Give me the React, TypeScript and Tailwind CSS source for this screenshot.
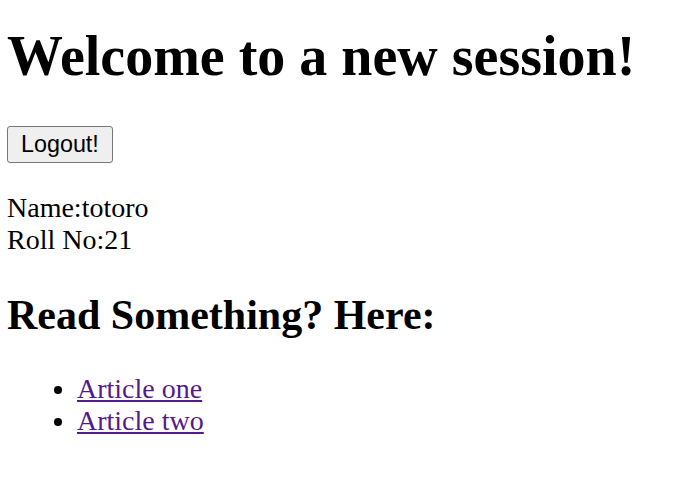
import React from "react";

export default function App() {
  return (
    <div className="flex flex-col items-start px-[7px] pt-[24px] font-['Liberation_Serif',serif] text-black bg-white min-h-[494px]">
      <h1 className="text-[56px] leading-[64px] font-bold whitespace-nowrap">Welcome to a new session!</h1>
      <button className="mt-[38px] font-['Liberation_Sans',Arial,sans-serif] text-[23.33px] leading-[27px] py-[4px] px-[13px] border border-[#767676] rounded-[3px] bg-[#efefef] text-black">
        Logout!
      </button>
      <p className="mt-[29px] text-[28px] leading-[32px]">
        Name:totoro
        <br />
        Roll No:21
      </p>
      <h2 className="mt-[35px] text-[42px] leading-[48px] font-bold">Read Something? Here:</h2>
      <ul className="mt-[34px] list-disc pl-[70px] text-[28px] leading-[32px]">
        <li>
          <a href="#" className="text-[#551a8b] underline">Article one</a>
        </li>
        <li>
          <a href="#" className="text-[#551a8b] underline">Article two</a>
        </li>
      </ul>
    </div>
  );
}
